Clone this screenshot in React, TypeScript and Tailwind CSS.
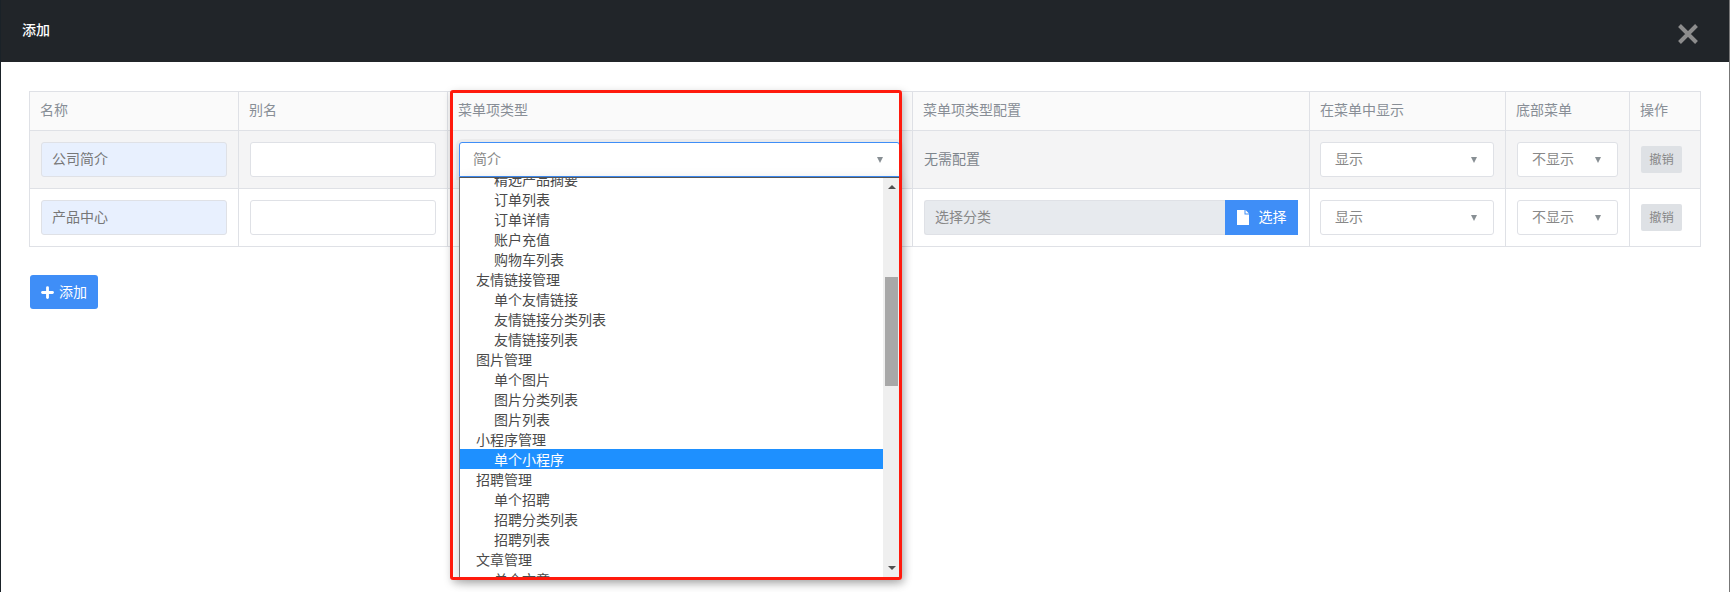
import { Plus } from "lucide-react";

const font = "font-['Noto_Sans_CJK_SC','Liberation_Sans',sans-serif]";

const options: [string, boolean][] = [
  ["精选产品摘要", true],
  ["订单列表", true],
  ["订单详情", true],
  ["账户充值", true],
  ["购物车列表", true],
  ["友情链接管理", false],
  ["单个友情链接", true],
  ["友情链接分类列表", true],
  ["友情链接列表", true],
  ["图片管理", false],
  ["单个图片", true],
  ["图片分类列表", true],
  ["图片列表", true],
  ["小程序管理", false],
  ["单个小程序", true],
  ["招聘管理", false],
  ["单个招聘", true],
  ["招聘分类列表", true],
  ["招聘列表", true],
  ["文章管理", false],
  ["单个文章", true],
];

function Caret() {
  return <span className="mt-[2px] h-0 w-0 border-x-[3.5px] border-t-[6px] border-x-transparent border-t-[#888f94]" />;
}

function SelectBox({ label, wide }: { label: string; wide?: boolean }) {
  return (
    <div className={`flex h-[35px] items-center justify-between rounded-[3px] border border-[#dfe1e6] bg-white pb-[2px] pl-[14px] pr-[16px] text-[#888] ${wide ? "-ml-px" : ""}`}>
      <span>{label}</span>
      <Caret />
    </div>
  );
}

function NameInput({ value }: { value: string }) {
  return (
    <div className="flex h-[35px] items-center rounded-[3px] border border-[#dfe1e6] bg-[#e8f0fe] pb-[2px] pl-[10px] text-[#777]">
      {value}
    </div>
  );
}

function UndoButton() {
  return (
    <button className="h-[27px] w-[41px] rounded-[2px] bg-[#dee1e5] text-[12.25px] text-[#888]">撤销</button>
  );
}

const th = "border border-[#dfe1e6] bg-[#fafafa] px-[10px] pb-[3px] text-left font-normal text-[#888e96]";
const td = "border border-[#dfe1e6] px-[11px] align-middle";

export default function App() {
  return (
    <div className={`relative h-[592px] w-[1730px] overflow-hidden border-l border-r border-l-[#1a2228] border-r-[#777] bg-white text-[14px] ${font}`}>
      <header className="flex h-[62px] items-center justify-between bg-[#212529] pb-[4px] pl-[21px] pr-[31px] font-medium text-white">
        <span className="text-[14px] leading-5">添加</span>
        <svg width="20" height="20" viewBox="0 0 20 20" className="mt-[10px]" fill="none" stroke="#8c8c8c" strokeWidth="4">
          <path d="M1.5 1.5 18.5 18.5M18.5 1.5 1.5 18.5" />
        </svg>
      </header>

      <div className="pl-[28px] pt-[29px]">
        <table className="w-[1671px] table-fixed border-collapse">
          <colgroup>
            <col className="w-[209px]" />
            <col className="w-[209px]" />
            <col className="w-[465px]" />
            <col className="w-[397px]" />
            <col className="w-[196px]" />
            <col className="w-[124px]" />
            <col className="w-[71px]" />
          </colgroup>
          <thead>
            <tr className="h-[39px]">
              <th className={th}>名称</th>
              <th className={th}>别名</th>
              <th className={th}>菜单项类型</th>
              <th className={th}>菜单项类型配置</th>
              <th className={th}>在菜单中显示</th>
              <th className={th}>底部菜单</th>
              <th className={th}>操作</th>
            </tr>
          </thead>
          <tbody>
            <tr className="h-[58px] bg-[#f4f4f5]">
              <td className={td}><NameInput value="公司简介" /></td>
              <td className={td}><div className="h-[35px] rounded-[3px] border border-[#dfe1e6] bg-white" /></td>
              <td className={td} />
              <td className={`${td} pb-[3px] text-[#7d858c]`}>无需配置</td>
              <td className={td}><SelectBox label="显示" wide /></td>
              <td className={td}><SelectBox label="不显示" /></td>
              <td className={td}><UndoButton /></td>
            </tr>
            <tr className="h-[58px]">
              <td className={td}><NameInput value="产品中心" /></td>
              <td className={td}><div className="h-[35px] rounded-[3px] border border-[#dfe1e6] bg-white" /></td>
              <td className={td} />
              <td className={td}>
                <div className="flex h-[35px]">
                  <div className="flex flex-1 items-center rounded-l-[3px] border border-r-0 border-[#dfe1e6] bg-[#e7eaee] pb-[2px] pl-[10px] text-[#888]">选择分类</div>
                  <div className="flex w-[73px] items-center justify-center gap-[10px] bg-[#3f8ef7] pb-[2px] text-white">
                    <svg width="12" height="15" viewBox="0 0 12 15" fill="white" className="mt-[2px]"><path d="M0 0h7.5v4.5H12V15H0zM8.5 0 12 3.5H8.5z" /></svg>
                    <span>选择</span>
                  </div>
                </div>
              </td>
              <td className={td}><SelectBox label="显示" wide /></td>
              <td className={td}><SelectBox label="不显示" /></td>
              <td className={td}><UndoButton /></td>
            </tr>
          </tbody>
        </table>

        <button className="mt-[28px] ml-[1px] flex h-[34px] w-[68px] items-center justify-center gap-[3px] rounded-[3px] bg-[#3f8ef7] pb-[2px] pr-[2px] text-white">
          <Plus size={17} strokeWidth={4} className="mt-[2px]" />
          <span>添加</span>
        </button>
      </div>

      {/* open select and its list, sit over the table */}
      <div className="absolute left-[458px] top-[142px] w-[441px]">
        <div className="flex h-[35px] items-center justify-between rounded-t-[3px] border border-[#3f8ef7] bg-white pb-[2px] pl-[13px] pr-[16px] text-[#888] shadow-[0_0_0_3px_rgba(0,0,0,0.03),0_5px_8px_rgba(0,0,0,0.12)]">
          <span>简介</span>
          <Caret />
        </div>
        <div className="flex h-[400px] overflow-hidden border border-t-[#555] border-l-[#777] border-r-0 border-b-0 bg-white shadow-[0_4px_12px_rgba(0,0,0,0.2)]">
          <ul className="-mt-[9px] flex-1 text-[#4a4a4a]">
            {options.map(([label, child]) => (
              <li
                key={label}
                className={`h-5 leading-5 ${child ? "pl-[34px]" : "pl-[16px]"} ${label === "单个小程序" ? "bg-[#1e90ff] text-white" : ""}`}
              >
                {label}
              </li>
            ))}
          </ul>
          <div className="relative w-[17px] bg-[#efefef]">
            <span className="absolute left-[5px] top-[7px] h-0 w-0 border-x-[4px] border-b-[4px] border-x-transparent border-b-[#505050]" />
            <div className="absolute left-[2px] top-[99px] h-[109px] w-[13px] bg-[#a8a8a8]" />
            <span className="absolute bottom-[7px] left-[5px] h-0 w-0 border-x-[4px] border-t-[4px] border-x-transparent border-t-[#505050]" />
          </div>
        </div>
      </div>

      {/* red annotation frame */}
      <div className="pointer-events-none absolute left-[449px] top-[90px] h-[490px] w-[452px] rounded-[3px] border-[3px] border-[#ff1a0d] shadow-[2px_3px_8px_rgba(0,0,0,0.25)]" />
    </div>
  );
}
